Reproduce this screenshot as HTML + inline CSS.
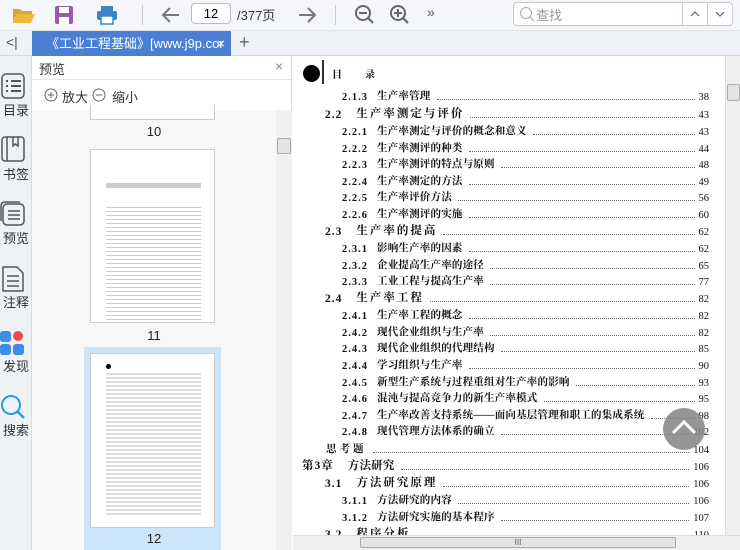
<!DOCTYPE html>
<html><head><meta charset="utf-8"><style>
*{margin:0;padding:0;box-sizing:border-box}
body{width:740px;height:550px;overflow:hidden;background:#fff;font-family:"Liberation Sans","Noto Sans CJK SC",sans-serif;position:relative}
.abs{position:absolute}
#tb{left:0;top:0;width:740px;height:31px;background:#f4f6f9;border-bottom:1px solid #e1e4e8}
#tabs{left:0;top:31px;width:740px;height:25px;background:#eef1f5;border-bottom:1px solid #d5d9de}
#tab{left:32px;top:31px;width:199px;height:25px;background:#4a7fd5;color:#fff;font-size:13px;line-height:25px;padding-left:14px;white-space:nowrap;overflow:hidden}
#side{left:0;top:56px;width:32px;height:494px;background:#eef1f5;border-right:1px solid #d9dde2}
.si{position:absolute;left:0;width:32px;text-align:center;font-size:13px;color:#333}
#pv{left:32px;top:56px;width:260px;height:494px;background:#fff;border-right:1px solid #d5d9de}
#thumbs{left:32px;top:110px;width:244px;height:440px;background:#f7f7f7}
.page{position:absolute;background:#fff;border:1px solid #ccc}
.num{position:absolute;width:244px;text-align:center;font-size:13px;color:#222}
#doc{left:293px;top:56px;width:432px;height:479px;background:#fff;font-family:"Liberation Serif","Noto Serif CJK SC",serif;color:#111}
.r{position:absolute;right:16px;height:16px;display:flex;align-items:flex-end;font-size:10.5px;font-weight:bold;white-space:nowrap;font-family:"Liberation Serif","Noto Serif CJK SC",serif;color:#111}
.r .n{letter-spacing:1px}
.r .t{margin-left:9px;letter-spacing:0.2px}
.r .d{flex:1;border-bottom:1.5px dotted #666;margin:0 4px 3px 6px}
.r .p{font-weight:normal;font-size:10.5px}
.l2{font-size:11.5px}
</style></head><body>
<div id="tb" class="abs">
<svg class="abs" style="left:12px;top:6px" width="24" height="18"><path d="M1 3h7l2 2h10v3H5L1 16z" fill="#d9a43a"/><path d="M5 8h18l-4 9H1z" fill="#f0b83f"/></svg>
<svg class="abs" style="left:54px;top:5px" width="20" height="20"><rect x="1" y="1" width="18" height="18" rx="2" fill="#9b59b6"/><rect x="5" y="2" width="10" height="6" fill="#fff"/><rect x="5" y="12" width="10" height="7" fill="#fff"/></svg>
<svg class="abs" style="left:96px;top:4px" width="22" height="22"><rect x="5" y="2" width="12" height="5" fill="#3a85c6"/><rect x="1" y="7" width="20" height="9" rx="2" fill="#3a85c6"/><rect x="5" y="12" width="12" height="8" fill="#fff" stroke="#3a85c6" stroke-width="1.5"/></svg>
<div class="abs" style="left:142px;top:5px;width:1px;height:20px;background:#ccc"></div>
<svg class="abs" style="left:161px;top:6px" width="20" height="18"><path d="M18 9H3M9 2L2 9l7 7" stroke="#777" stroke-width="2" fill="none"/></svg>
<div class="abs" style="left:191px;top:3px;width:40px;height:21px;border:1px solid #bbb;border-radius:4px;background:#fff;font-size:13px;text-align:center;line-height:19px">12</div>
<div class="abs" style="left:237px;top:5px;font-size:13px;color:#333">/377页</div>
<svg class="abs" style="left:297px;top:6px" width="20" height="18"><path d="M2 9h15M11 2l7 7-7 7" stroke="#777" stroke-width="2" fill="none"/></svg>
<div class="abs" style="left:335px;top:5px;width:1px;height:20px;background:#ccc"></div>
<svg class="abs" style="left:354px;top:4px" width="22" height="22"><circle cx="9" cy="9" r="7" stroke="#666" stroke-width="2" fill="none"/><path d="M5 9h8M14 14l5 5" stroke="#666" stroke-width="2"/></svg>
<svg class="abs" style="left:389px;top:4px" width="22" height="22"><circle cx="9" cy="9" r="7" stroke="#666" stroke-width="2" fill="none"/><path d="M5 9h8M9 5v8M14 14l5 5" stroke="#666" stroke-width="2"/></svg>
<div class="abs" style="left:427px;top:4px;font-size:14px;color:#555">»</div>
<div class="abs" style="left:513px;top:2px;width:220px;height:24px;border:1px solid #c8ccd2;border-radius:4px;background:#fff"></div>
<svg class="abs" style="left:519px;top:6px" width="16" height="16"><circle cx="7" cy="7" r="5.5" stroke="#aaa" fill="none"/><path d="M11 11l4 4" stroke="#aaa"/></svg>
<div class="abs" style="left:536px;top:5px;font-size:13px;color:#999">查找</div>
<div class="abs" style="left:682px;top:2px;width:1px;height:24px;background:#c8ccd2"></div>
<div class="abs" style="left:707px;top:2px;width:1px;height:24px;background:#c8ccd2"></div>
<svg class="abs" style="left:689px;top:10px" width="12" height="8"><path d="M2 6l4-4 4 4" stroke="#555" fill="none"/></svg>
<svg class="abs" style="left:714px;top:10px" width="12" height="8"><path d="M2 2l4 4 4-4" stroke="#555" fill="none"/></svg>
</div>
<div id="tabs" class="abs"></div>
<div class="abs" style="left:6px;top:34px;font-size:14px;color:#555">&lt;|</div>
<div id="tab" class="abs">《工业工程基础》[www.j9p.cor <span style="position:absolute;right:6px;top:0">×</span></div>
<div class="abs" style="left:239px;top:32px;font-size:18px;color:#666">+</div>
<div id="side" class="abs">
<svg class="abs" style="left:1px;top:17px" width="24" height="26"><rect x="1" y="1" width="22" height="24" rx="4" stroke="#555" stroke-width="1.5" fill="none"/><path d="M5 8h2M10 8h10M5 13h2M10 13h10M5 18h2M10 18h10" stroke="#555" stroke-width="2"/></svg>
<div class="si" style="top:44px">目录</div>
<svg class="abs" style="left:1px;top:80px" width="24" height="26"><rect x="1" y="1" width="22" height="24" rx="3" stroke="#555" stroke-width="1.5" fill="none"/><path d="M6 1v24M12 1v9l2.5-2 2.5 2V1" stroke="#555" stroke-width="1.5" fill="none"/></svg>
<div class="si" style="top:108px">书签</div>
<svg class="abs" style="left:0;top:145px" width="26" height="26"><rect x="3" y="3" width="21" height="21" rx="4" stroke="#555" stroke-width="1.5" fill="none"/><path d="M1 20V5q0-4 4-4h15M8 10h12M8 14h12M8 18h12" stroke="#555" stroke-width="1.5" fill="none"/></svg>
<div class="si" style="top:172px">预览</div>
<svg class="abs" style="left:1px;top:210px" width="24" height="26"><path d="M2 1h14l6 6v18H2z" stroke="#555" stroke-width="1.5" fill="none" stroke-linejoin="round"/><path d="M6 10h12M6 15h12M6 20h12" stroke="#555" stroke-width="1.5"/></svg>
<div class="si" style="top:236px">注释</div>
<div class="abs" style="left:0;top:275px;width:11px;height:11px;border-radius:3px;background:#3a8ee6"></div>
<div class="abs" style="left:13px;top:275px;width:10px;height:10px;border-radius:5px;background:#f04b4b"></div>
<div class="abs" style="left:0;top:288px;width:11px;height:11px;border-radius:3px;background:#3a8ee6"></div>
<div class="abs" style="left:13px;top:288px;width:11px;height:11px;border-radius:3px;background:#3a8ee6"></div>
<div class="si" style="top:300px">发现</div>
<svg class="abs" style="left:0;top:338px" width="26" height="26"><circle cx="11" cy="11" r="9" stroke="#2c9ce0" stroke-width="2" fill="none"/><path d="M17 17l7 7" stroke="#2c9ce0" stroke-width="2.5"/></svg>
<div class="si" style="top:364px">搜索</div>
</div>
<div id="pv" class="abs">
<div class="abs" style="left:7px;top:3px;font-size:13px;color:#333">预览</div>
<div class="abs" style="left:243px;top:2px;font-size:14px;color:#888">×</div>
<div class="abs" style="left:0;top:23px;width:259px;height:1px;background:#e3e3e3"></div>
<svg class="abs" style="left:12px;top:32px" width="14" height="14"><circle cx="7" cy="7" r="6" stroke="#666" fill="none"/><path d="M4 7h6M7 4v6" stroke="#666"/></svg>
<div class="abs" style="left:30px;top:31px;font-size:13px;color:#333">放大</div>
<svg class="abs" style="left:60px;top:32px" width="14" height="14"><circle cx="7" cy="7" r="6" stroke="#666" fill="none"/><path d="M4 7h6" stroke="#666"/></svg>
<div class="abs" style="left:80px;top:31px;font-size:13px;color:#333">缩小</div>
</div>
<div id="thumbs" class="abs">
<div class="page" style="left:58px;top:-5px;width:125px;height:15px;border-top:none"></div>
<div class="num" style="top:14px">10</div>
<div class="page" style="left:58px;top:39px;width:125px;height:174px">
<div class="abs" style="left:15px;top:33px;width:95px;height:5px;background:#ccc"></div>
<div class="abs" style="left:15px;top:55px;width:95px;height:115px;background:repeating-linear-gradient(#fff 0 2px,#ccc 2px 3px,#fff 3px 4px)"></div>
</div>
<div class="num" style="top:218px">11</div>
<div class="abs" style="left:52px;top:237px;width:137px;height:203px;background:#cce4f7"></div>
<div class="page" style="left:58px;top:243px;width:125px;height:175px">
<div class="abs" style="left:15px;top:10px;width:5px;height:5px;border-radius:3px;background:#000"></div>
<div class="abs" style="left:15px;top:18px;width:95px;height:145px;background:repeating-linear-gradient(#fff 0 1.5px,#bbb 1.5px 2.5px,#fff 2.5px 4px)"></div>
</div>
<div class="num" style="top:421px">12</div>
</div>
<div class="abs" style="left:276px;top:110px;width:16px;height:440px;background:#f0f0f0"></div>
<div class="abs" style="left:277px;top:138px;width:14px;height:16px;background:#e4e4e4;border:1px solid #aaa;border-radius:2px"></div>
<div id="doc" class="abs">
<div class="abs" style="left:10px;top:9px;width:17px;height:17px;border-radius:50%;background:#000"></div>
<div class="abs" style="left:29px;top:4px;width:2px;height:24px;background:#333"></div>
<div class="abs" style="left:39px;top:10px;font-size:10px;font-weight:bold">目</div>
<div class="abs" style="left:72px;top:10px;font-size:10px;font-weight:bold">录</div>
</div>
<div class="abs" style="left:293px;top:56px;width:432px;height:479px;overflow:hidden">
<div class="r" style="left:49px;top:31px"><span class="n">2.1.3</span><span class="t">生产率管理</span><span class="d"></span><span class="p">38</span></div>
<div class="r l2" style="left:32px;top:49px"><span class="n">2.2</span><span class="t" style="letter-spacing:2px;margin-left:14px">生产率测定与评价</span><span class="d"></span><span class="p">43</span></div>
<div class="r" style="left:49px;top:66px"><span class="n">2.2.1</span><span class="t">生产率测定与评价的概念和意义</span><span class="d"></span><span class="p">43</span></div>
<div class="r" style="left:49px;top:83px"><span class="n">2.2.2</span><span class="t">生产率测评的种类</span><span class="d"></span><span class="p">44</span></div>
<div class="r" style="left:49px;top:99px"><span class="n">2.2.3</span><span class="t">生产率测评的特点与原则</span><span class="d"></span><span class="p">48</span></div>
<div class="r" style="left:49px;top:116px"><span class="n">2.2.4</span><span class="t">生产率测定的方法</span><span class="d"></span><span class="p">49</span></div>
<div class="r" style="left:49px;top:132px"><span class="n">2.2.5</span><span class="t">生产率评价方法</span><span class="d"></span><span class="p">56</span></div>
<div class="r" style="left:49px;top:149px"><span class="n">2.2.6</span><span class="t">生产率测评的实施</span><span class="d"></span><span class="p">60</span></div>
<div class="r l2" style="left:32px;top:166px"><span class="n">2.3</span><span class="t" style="letter-spacing:2px;margin-left:14px">生产率的提高</span><span class="d"></span><span class="p">62</span></div>
<div class="r" style="left:49px;top:183px"><span class="n">2.3.1</span><span class="t">影响生产率的因素</span><span class="d"></span><span class="p">62</span></div>
<div class="r" style="left:49px;top:200px"><span class="n">2.3.2</span><span class="t">企业提高生产率的途径</span><span class="d"></span><span class="p">65</span></div>
<div class="r" style="left:49px;top:216px"><span class="n">2.3.3</span><span class="t">工业工程与提高生产率</span><span class="d"></span><span class="p">77</span></div>
<div class="r l2" style="left:32px;top:233px"><span class="n">2.4</span><span class="t" style="letter-spacing:2px;margin-left:14px">生产率工程</span><span class="d"></span><span class="p">82</span></div>
<div class="r" style="left:49px;top:250px"><span class="n">2.4.1</span><span class="t">生产率工程的概念</span><span class="d"></span><span class="p">82</span></div>
<div class="r" style="left:49px;top:267px"><span class="n">2.4.2</span><span class="t">现代企业组织与生产率</span><span class="d"></span><span class="p">82</span></div>
<div class="r" style="left:49px;top:283px"><span class="n">2.4.3</span><span class="t">现代企业组织的代理结构</span><span class="d"></span><span class="p">85</span></div>
<div class="r" style="left:49px;top:300px"><span class="n">2.4.4</span><span class="t">学习组织与生产率</span><span class="d"></span><span class="p">90</span></div>
<div class="r" style="left:49px;top:317px"><span class="n">2.4.5</span><span class="t">新型生产系统与过程重组对生产率的影响</span><span class="d"></span><span class="p">93</span></div>
<div class="r" style="left:49px;top:333px"><span class="n">2.4.6</span><span class="t">混沌与提高竞争力的新生产率模式</span><span class="d"></span><span class="p">95</span></div>
<div class="r" style="left:49px;top:350px"><span class="n">2.4.7</span><span class="t">生产率改善支持系统——面向基层管理和职工的集成系统</span><span class="d"></span><span class="p">98</span></div>
<div class="r" style="left:49px;top:366px"><span class="n">2.4.8</span><span class="t">现代管理方法体系的确立</span><span class="d"></span><span class="p">102</span></div>
<div class="r" style="left:33px;top:384px"><span class="n" style="letter-spacing:3px">思考题</span><span class="d"></span><span class="p">104</span></div>
<div class="r" style="left:9px;top:401px;font-size:11.5px"><span class="n">第3章</span><span class="t" style="margin-left:14px">方法研究</span><span class="d"></span><span class="p">106</span></div>
<div class="r l2" style="left:32px;top:418px"><span class="n">3.1</span><span class="t" style="letter-spacing:2px;margin-left:14px">方法研究原理</span><span class="d"></span><span class="p">106</span></div>
<div class="r" style="left:49px;top:435px"><span class="n">3.1.1</span><span class="t">方法研究的内容</span><span class="d"></span><span class="p">106</span></div>
<div class="r" style="left:49px;top:452px"><span class="n">3.1.2</span><span class="t">方法研究实施的基本程序</span><span class="d"></span><span class="p">107</span></div>
<div class="r l2" style="left:32px;top:469px"><span class="n">3.2</span><span class="t" style="letter-spacing:2px;margin-left:14px">程序分析</span><span class="d"></span><span class="p">110</span></div>
</div>
<div class="abs" style="left:663px;top:408px;width:42px;height:42px;border-radius:50%;background:rgba(130,130,130,.85)"></div>
<svg class="abs" style="left:670px;top:416px" width="28" height="24"><path d="M3 17l11-11 11 11" stroke="#fff" stroke-width="3" fill="none"/></svg>
<div class="abs" style="left:725px;top:56px;width:15px;height:479px;background:#f0f0f0;border-left:1px solid #ddd"></div>
<div class="abs" style="left:727px;top:84px;width:13px;height:17px;background:#e4e4e4;border:1px solid #aaa;border-radius:2px"></div>
<div class="abs" style="left:293px;top:535px;width:447px;height:15px;background:#f0f0f0;border-top:1px solid #ddd"></div>
<div class="abs" style="left:360px;top:537px;width:316px;height:11px;background:#e4e4e4;border:1px solid #aaa;border-radius:2px;font-size:8px;text-align:center;line-height:9px;color:#555">III</div>
</body></html>
